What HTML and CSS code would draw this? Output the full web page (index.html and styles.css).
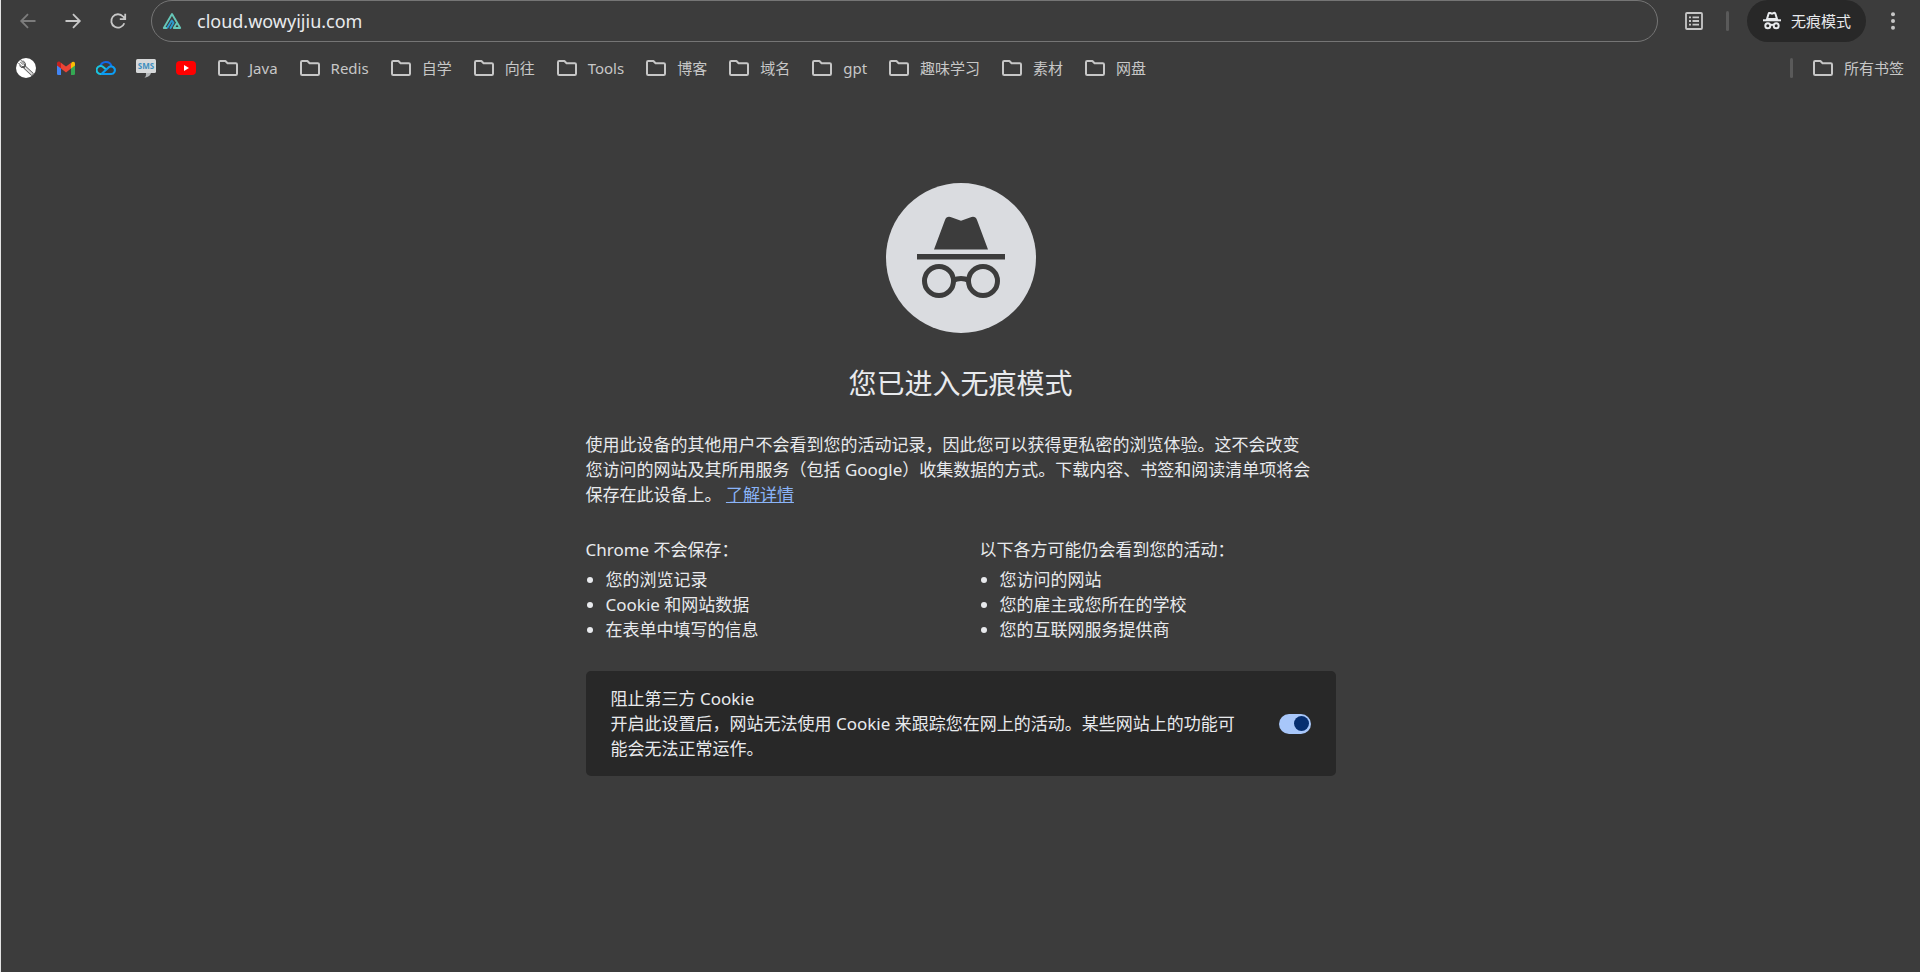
FILE: index.html
```html
<!DOCTYPE html>
<html lang="zh-CN">
<head>
<meta charset="utf-8">
<title>无痕模式</title>
<link rel="stylesheet" href="styles.css">
</head>
<body>
<svg class="defs" aria-hidden="true">
  <symbol id="folder" viewBox="0 0 20 20"><path d="M2.200 3H7.400l2.200 2.200h8.200q1.200 0 1.200 1.200v9.400q0 1.200-1.200 1.200H2.200Q1 17 1 15.800V4.200Q1 3 2.200 3z" fill="none" stroke="currentColor" stroke-width="2" stroke-linejoin="round"/></symbol>
</svg>

<header class="browser">
  <div class="toolbar">
    <nav class="nav" aria-label="导航">
      <button class="icon-btn dim" aria-label="后退"><svg viewBox="0 0 20 20"><path d="M17.500 10H3.500M10 3.200L3.200 10l6.800 6.800" class="line"/></svg></button>
      <button class="icon-btn" aria-label="前进"><svg viewBox="0 0 20 20"><path d="M2.500 10h14M10 3.200l6.800 6.800L10 16.800" class="line"/></svg></button>
      <button class="icon-btn" aria-label="重新加载"><svg viewBox="0 0 20 20"><path d="M16.300 12.200A6.700 6.700 0 1 1 15 5.500l2 2M17.200 2.800v5.400h-5.400" class="line"/></svg></button>
    </nav>
    <label class="omnibox">
      <svg class="site" viewBox="0 0 20 20" fill="none" stroke-width="1.900" stroke-linejoin="round" stroke-linecap="round"><path d="M4.500 17H1.800L10 3l8.200 14h-6.400l2.400-4" stroke="#66c7b8"/><path d="M5.500 16.500L9.800 9.500l1.700 2.300L8.500 17" stroke="#2c9bd0"/></svg>
      <input class="url" type="text" value="cloud.wowyijiu.com" aria-label="地址" spellcheck="false">
    </label>
    <div class="actions">
      <button class="icon-btn" aria-label="阅读清单"><svg viewBox="0 0 20 20"><rect x="2" y="2" width="16" height="16" rx="1" class="line"/><path d="M5 6.300h2M5 10h2M5 13.700h2M8.500 6.300H15M8.500 10H15M8.500 13.700H15" class="line"/></svg></button>
      <span class="divider"></span>
      <button class="chip">
        <svg viewBox="0 0 20 20"><path d="M5 8L6.600 2.800q.4-1.200 1.600-.8l1.800.6 1.800-.6q1.200-.4 1.600.8L15 8z" fill="none" stroke="currentColor" stroke-width="2"/><path d="M1 9.300h18" stroke="currentColor" stroke-width="2"/><circle cx="5.800" cy="14.800" r="2.500" fill="none" stroke="currentColor" stroke-width="2"/><circle cx="14.200" cy="14.800" r="2.500" fill="none" stroke="currentColor" stroke-width="2"/><path d="M8.200 14.200q1.800-.9 3.600 0" fill="none" stroke="currentColor" stroke-width="1.800"/></svg>
        <span>无痕模式</span>
      </button>
      <button class="icon-btn" aria-label="更多"><svg viewBox="0 0 20 20" fill="currentColor"><circle cx="10" cy="3.200" r="2"/><circle cx="10" cy="10" r="2"/><circle cx="10" cy="16.800" r="2"/></svg></button>
    </div>
  </div>

  <nav class="bookmarks" aria-label="书签">
    <a class="mark" href="#" aria-label="工具"><svg viewBox="0 0 20 20"><circle cx="10" cy="10" r="10" fill="#fff"/><path d="M9 9.500l7 6.500" stroke="#555" stroke-width="3.400" stroke-linecap="round"/><path d="M9 9.500l7 6.500" stroke="#ddd" stroke-width="1.800" stroke-linecap="round"/><path d="M2.500 5l3.300 3.500 2.500.2.200-2.600L5 2.200M4.200 3.800l3 3M3.500 7.500l1.500 1.800 4 .5M7 2.500l2.300 2.800.3 3" fill="none" stroke="#444" stroke-width=".9"/></svg></a>
    <a class="mark" href="#" aria-label="Gmail"><svg viewBox="0 0 20 20"><path d="M1 5v10.800q0 1.200 1.200 1.200H5V8z" fill="#4285f4"/><path d="M19 5v10.800q0 1.200-1.200 1.200H15V8z" fill="#34a853"/><path d="M15 5.500L16 4q3-1 3 1.500V7.500l-4 3z" fill="#fbbc04"/><path d="M1 7.500v-2Q1 3 3.500 3.500L5 5v5.500z" fill="#c5221f"/><path d="M5 4.700l5 3.900 5-3.900v5.800l-5 3.900-5-3.900z" fill="#ea4335"/></svg></a>
    <a class="mark" href="#" aria-label="腾讯云"><svg viewBox="0 0 20 20" fill="none" stroke-width="2.100"><path d="M4.300 8.500A5.800 5.800 0 0 1 15.500 8" stroke="#1268e8"/><path d="M10.500 11.800L7.800 9.600A4 4 0 1 0 5 16" stroke="#19c3e0"/><path d="M5 16h10.200a3.800 3.800 0 1 0-3-6.300L5.500 16" stroke="#0c9cf2"/></svg></a>
    <a class="mark" href="#" aria-label="SMS"><svg viewBox="0 0 20 20"><path d="M1.500 1h17q1.500 0 1.500 1.500v11q0 1.500-1.500 1.500h-17Q0 15 0 13.500v-11Q0 1 1.500 1z" fill="#d6d8d9"/><path d="M10 15h5q-.5 3.500-6.500 4.800Q10.500 18 10 15z" fill="#b2b5b7"/><text x="10" y="11" class="sms">SMS</text></svg></a>
    <a class="mark" href="#" aria-label="YouTube"><svg viewBox="0 0 20 20"><rect y="3" width="20" height="14" rx="4" fill="#f00"/><path d="M8 7l5 3-5 3z" fill="#fff"/></svg></a>
    <a class="folder" href="#"><svg><use href="#folder"/></svg>Java</a>
    <a class="folder" href="#"><svg><use href="#folder"/></svg>Redis</a>
    <a class="folder" href="#"><svg><use href="#folder"/></svg>自学</a>
    <a class="folder" href="#"><svg><use href="#folder"/></svg>向往</a>
    <a class="folder" href="#"><svg><use href="#folder"/></svg>Tools</a>
    <a class="folder" href="#"><svg><use href="#folder"/></svg>博客</a>
    <a class="folder" href="#"><svg><use href="#folder"/></svg>域名</a>
    <a class="folder" href="#"><svg><use href="#folder"/></svg>gpt</a>
    <a class="folder" href="#"><svg><use href="#folder"/></svg>趣味学习</a>
    <a class="folder" href="#"><svg><use href="#folder"/></svg>素材</a>
    <a class="folder" href="#"><svg><use href="#folder"/></svg>网盘</a>
    <div class="all">
      <span class="divider"></span>
      <a class="folder" href="#"><svg><use href="#folder"/></svg>所有书签</a>
    </div>
  </nav>
</header>

<main class="page">
  <svg class="logo" viewBox="0 0 150 150" aria-hidden="true">
    <circle cx="75" cy="75" r="75" fill="#dadce0"/>
    <path d="M48 66.500L59 37q1.500-4 5.500-3l10.500 3.800L85.500 34q4-1 5.500 3l11 29.500z" fill="#3c3c3c"/>
    <path d="M31 71h88v5.500H31z" fill="#3c3c3c"/>
    <g fill="none" stroke="#3c3c3c" stroke-width="5"><circle cx="53" cy="98" r="14.500"/><circle cx="97" cy="98" r="14.500"/><path d="M67 97.500q8-4 16 0"/></g>
  </svg>
  <h1 class="title">您已进入无痕模式</h1>
  <p class="intro">使用此设备的其他用户不会看到您的活动记录，因此您可以获得更私密的浏览体验。这不会改变<br>您访问的网站及其所用服务（包括 Google）收集数据的方式。下载内容、书签和阅读清单项将会<br>保存在此设备上。 <a class="more" href="#">了解详情</a></p>
  <div class="columns">
    <section>
      <h2 class="subhead">Chrome 不会保存：</h2>
      <ul class="list"><li>您的浏览记录</li><li>Cookie 和网站数据</li><li>在表单中填写的信息</li></ul>
    </section>
    <section>
      <h2 class="subhead">以下各方可能仍会看到您的活动：</h2>
      <ul class="list"><li>您访问的网站</li><li>您的雇主或您所在的学校</li><li>您的互联网服务提供商</li></ul>
    </section>
  </div>
  <div class="cookie">
    <div class="cookie-text">
      <label class="cookie-title" for="block">阻止第三方 Cookie</label>
      <p class="cookie-desc">开启此设置后，网站无法使用 Cookie 来跟踪您在网上的活动。某些网站上的功能可<br>能会无法正常运作。</p>
    </div>
    <input class="toggle" type="checkbox" role="switch" id="block" checked>
  </div>
</main>
</body>
</html>
```
FILE: styles.css
```css
* { box-sizing: border-box; }

body {
  margin: 0;
  min-height: 100vh;
  border-left: 1px solid #e4e4e4;
  background: #3c3c3c;
  color: #e8eaed;
  font-family: "Noto Sans", "Noto Sans CJK SC", sans-serif;
  font-size: 17px;
  line-height: 25px;
}

button, input { font: inherit; color: inherit; }
a { color: inherit; text-decoration: none; }
svg { display: block; }
.defs { display: none; }

.toolbar {
  display: flex;
  align-items: center;
  height: 42px;
  padding: 0 17px 0 17px;
}
.nav { display: flex; gap: 25px; margin-right: 23px; }
.icon-btn {
  padding: 0;
  border: 0;
  background: none;
  color: #c7c7c7;
}
.icon-btn svg { width: 20px; height: 20px; }
.dim { color: #7c7c7c; }
.line { fill: none; stroke: currentColor; stroke-width: 1.8; }

.omnibox {
  flex: 1;
  display: flex;
  align-items: center;
  gap: 15px;
  height: 42px;
  padding: 0 10px;
  border: 1px solid #757575;
  border-radius: 21px;
}
.site { width: 20px; height: 20px; }
.url {
  flex: 1;
  padding: 0;
  border: 0;
  outline: 0;
  background: none;
  font-size: 18px;
}

.actions { display: flex; align-items: center; margin-left: 26px; }
.divider { width: 3px; height: 20px; border-radius: 2px; background: #5a5a5a; }
.actions .divider { margin: 0 18px 0 22px; }
.chip {
  display: flex;
  align-items: center;
  gap: 9px;
  height: 42px;
  margin-right: 17px;
  padding: 0 15px;
  border: 0;
  border-radius: 21px;
  background: #282828;
  font-size: 15px;
}
.chip svg { width: 20px; height: 20px; }

.bookmarks {
  display: flex;
  align-items: center;
  height: 52px;
  padding: 0 16px 0 15px;
  color: #c7c7c7;
  font-size: 15px;
}
.mark { margin-right: 20px; }
.mark svg { width: 20px; height: 20px; }
.sms { fill: #3d8fc0; font: bold 8px "Noto Sans", sans-serif; text-anchor: middle; }
.folder { display: flex; align-items: center; gap: 11px; margin: 0 20px 0 2px; }
.folder svg { width: 20px; height: 20px; }
.all { display: flex; align-items: center; gap: 18px; margin-left: auto; }
.all .folder { margin-right: 0; }

.page { max-width: 750px; margin: 89px auto 0; }
.logo { width: 150px; height: 150px; margin: 0 auto; }
.title {
  margin: 32px 0 31px;
  font-size: 28px;
  font-weight: 400;
  line-height: 36px;
  text-align: center;
}
.intro { margin: 0 0 30px; white-space: nowrap; }
.more { color: #8ab4f8; text-decoration: underline; }

.columns { display: grid; grid-template-columns: 1fr 1fr; column-gap: 38px; }
.subhead { margin: 0 0 5px; font-size: 17px; font-weight: 400; }
.list { margin: 0; padding-left: 20px; }

.cookie {
  display: flex;
  align-items: center;
  justify-content: space-between;
  margin-top: 29px;
  padding: 15px 25px;
  border-radius: 5px;
  background: #282828;
}
.cookie-title { display: block; }
.cookie-desc { margin: 0; }
.toggle {
  appearance: none;
  display: grid;
  align-items: center;
  width: 32px;
  height: 20px;
  margin: 0;
  padding: 0 2px;
  border-radius: 10px;
  background: #a8c7fa;
}
.toggle::before {
  content: "";
  width: 15px;
  height: 15px;
  border-radius: 50%;
  background: #062e6f;
}
.toggle:checked::before { justify-self: end; }
```
